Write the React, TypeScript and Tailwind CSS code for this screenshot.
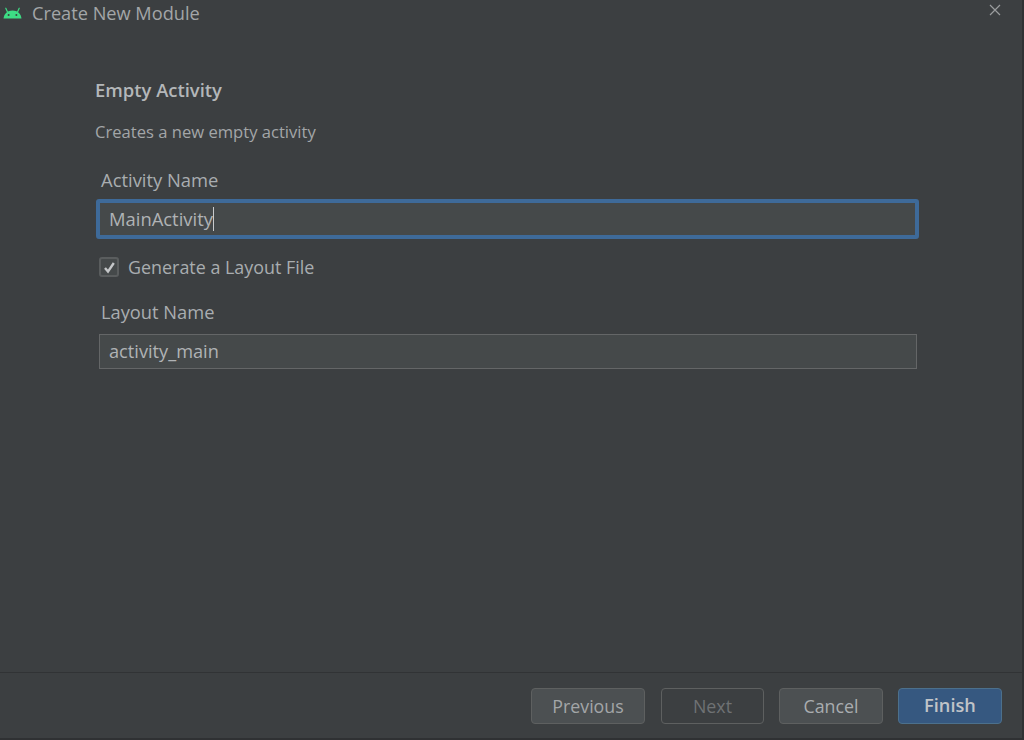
import React from 'react';

const AndroidIcon = () => (
  <svg width="19" height="12" viewBox="0 0 19 12" className="shrink-0 -mt-[2px]">
    <path d="M0.5 11.5C0.9 6.8 4.5 3.4 9.5 3.4s8.6 3.4 9 8.1z" fill="#3ddc84" />
    <path d="M4.6 5.2L2.8 1.2M14.4 5.2l1.8-4" stroke="#3ddc84" strokeWidth="1.2" strokeLinecap="round" />
    <circle cx="5.6" cy="8" r="1" fill="#3c3f41" />
    <circle cx="13.4" cy="8" r="1" fill="#3c3f41" />
  </svg>
);

const App = () => {
  return (
    <div className="w-[1024px] h-[740px] flex flex-col bg-[#3c3f41] text-[#a9adb0] overflow-hidden border-b-2 border-r-2 border-b-[#2f3133] border-r-[#2f3133]" style={{ fontFamily: '"Open Sans", "Noto Sans", sans-serif' }}>
      {/* Title bar */}
      <div className="h-[27px] flex items-center pl-[3px] pr-[21px] shrink-0">
        <AndroidIcon />
        <span className="ml-[10px] text-[18.2px] text-[#a3a6a8] leading-none">Create New Module</span>
        <svg width="12" height="12" viewBox="0 0 12 12" className="ml-auto -mt-[8px]">
          <path d="M1 1l10 10M11 1L1 11" stroke="#9a9c9e" strokeWidth="1.2" />
        </svg>
      </div>

      {/* Form */}
      <div className="flex-1 flex flex-col pl-[95px] pr-[103px]">
        <h1 className="mt-[51px] text-[18.4px] leading-[24px] font-semibold text-[#b4b7b9]">Empty Activity</h1>
        <p className="mt-[19px] text-[16.6px] leading-[22px] text-[#a3a6a8]">Creates a new empty activity</p>

        <label className="mt-[25px] ml-[6px] text-[18.4px] leading-[24px] text-[#a9adb0]">Activity Name</label>
        <div className="mt-[7px] ml-[1px] h-[40px] flex items-center bg-[#45494a] border-4 border-[#3e6a99] rounded-[3px] pl-[9px] text-[18.4px] text-[#b0b3b5]">
          <span className="leading-none">MainActivity</span>
          <span className="w-px h-[24px] bg-[#c8cacc]"></span>
        </div>

        <div className="mt-[16px] ml-[4px] flex items-center">
          <span className="w-[20px] h-[20px] flex items-center justify-center bg-[#45494a] border-2 border-[#5a5d5e] rounded-[3px]">
            <svg width="13" height="13" viewBox="0 0 13 13">
              <path d="M2 7l3 3.6 5.8-8.6" fill="none" stroke="#c5c7c9" strokeWidth="2.4" />
            </svg>
          </span>
          <span className="ml-[9px] text-[17.9px] leading-[24px]">Generate a Layout File</span>
        </div>

        <label className="mt-[21px] ml-[6px] text-[18.3px] leading-[24px]">Layout Name</label>
        <div className="mt-[10px] ml-[4px] mr-[2px] h-[35px] flex items-center bg-[#45494a] border border-[#646667] pl-[9px] text-[18.2px] text-[#b0b3b5]">
          <span className="leading-none">activity_main</span>
        </div>
      </div>

      {/* Footer */}
      <div className="h-[66px] shrink-0 border-t border-[#313335] flex items-start justify-end pt-[15px] pr-[20px]">
        <button className="w-[114px] h-[36px] bg-[#4c5052] border border-[#5e6060] rounded-[4px] text-[17.8px] text-[#a3a6a8]">Previous</button>
        <button className="w-[103px] h-[36px] ml-[16px] bg-[#3c3f41] border border-[#5e6060] rounded-[4px] text-[17.8px] text-[#6f7274]">Next</button>
        <button className="w-[104px] h-[36px] ml-[15px] bg-[#4c5052] border border-[#5e6060] rounded-[4px] text-[17.8px] text-[#a9adb0]">Cancel</button>
        <button className="w-[104px] h-[36px] ml-[15px] bg-[#365880] border border-[#4c708c] rounded-[4px] text-[18.2px] font-semibold text-[#c0c4c8]">Finish</button>
      </div>
    </div>
  );
};

export default App;
